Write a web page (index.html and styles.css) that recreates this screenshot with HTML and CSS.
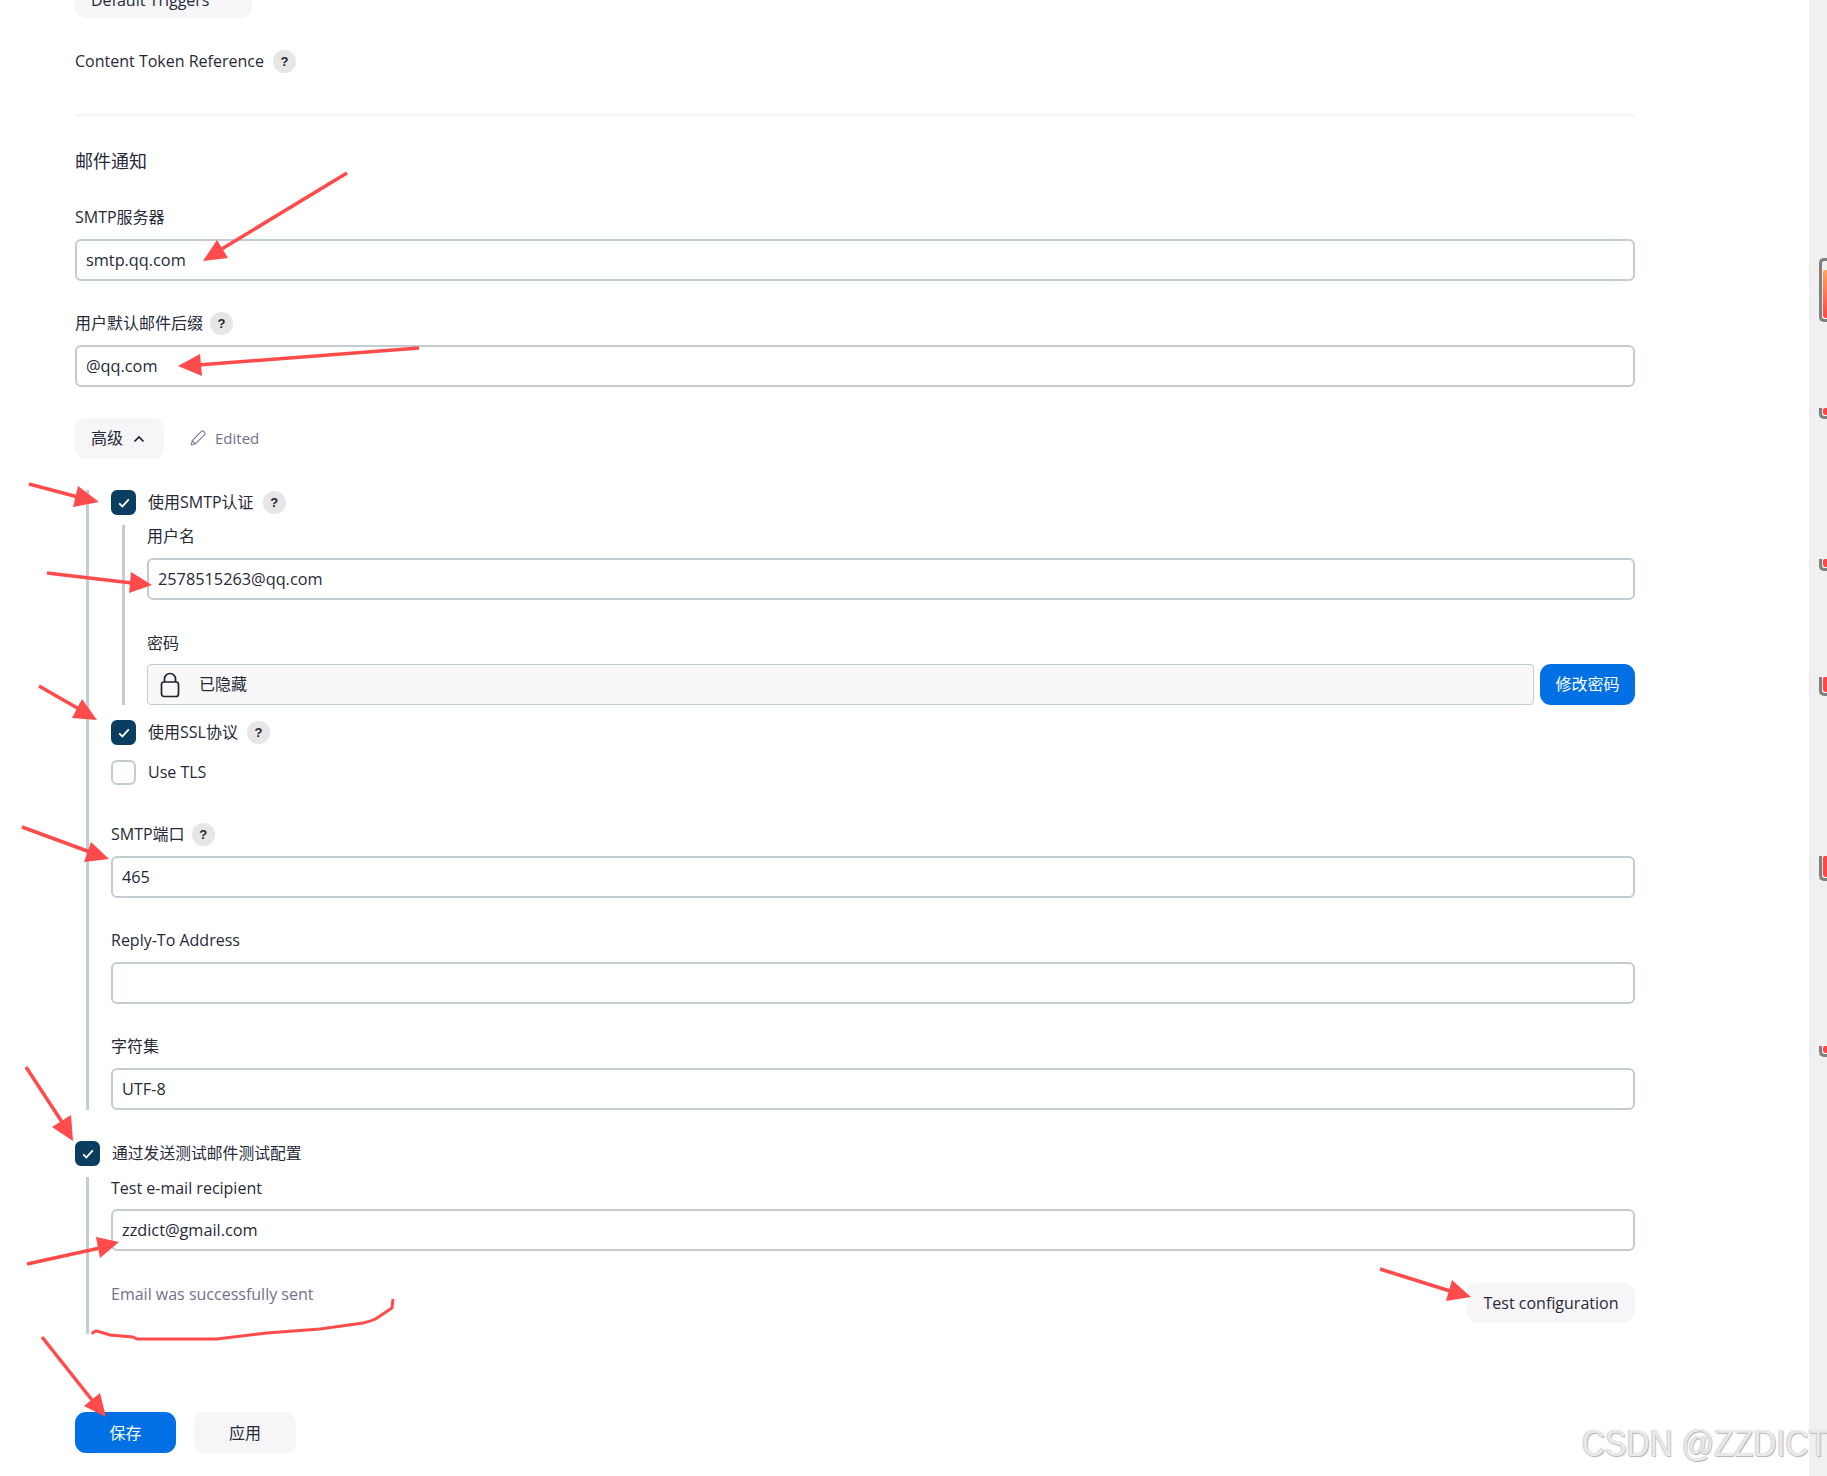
FILE: index.html
```html
<!DOCTYPE html>
<html lang="zh">
<head>
<meta charset="utf-8">
<title>邮件通知</title>
<link rel="stylesheet" href="styles.css">
</head>
<body>
<div class="shell">
  <main class="page">
    <button class="btn trigger">Default Triggers <span class="tri-caret">⌄</span></button>
    <div class="row token"><span>Content Token Reference</span><span class="help">?</span></div>
    <div class="divider"></div>
    <h2 class="section">邮件通知</h2>

    <div class="field first">
      <label class="lbl">SMTP服务器</label>
      <div class="input">smtp.qq.com</div>
    </div>
    <div class="field">
      <label class="lbl row"><span>用户默认邮件后缀</span><span class="help">?</span></label>
      <div class="input">@qq.com</div>
    </div>

    <div class="adv-row">
      <button class="btn adv">高级
        <svg class="chev" viewBox="0 0 12 8" width="12" height="8"><path d="M1.5 6.5 6 2l4.5 4.5" fill="none" stroke="#1f2330" stroke-width="1.7"/></svg>
      </button>
      <span class="edited">
        <svg viewBox="0 0 16 16" width="16" height="16"><path d="M1.2 14.8l1-4.2L11.4 1.4a1.6 1.6 0 0 1 2.3 0l.9.9a1.6 1.6 0 0 1 0 2.3L5.4 13.8z M2.2 10.6l3.2 3.2" fill="none" stroke="#7a7a96" stroke-width="1.1" stroke-linejoin="round"/></svg>
        Edited
      </span>
    </div>

    <section class="group adv-group">
      <div class="check-row">
        <span class="cb on"><svg viewBox="0 0 12 10" width="12" height="10"><path d="M1.2 5.4 4.4 8.4 10.8 1.4" fill="none" stroke="#fff" stroke-width="1.8"/></svg></span>
        <span>使用SMTP认证</span><span class="help">?</span>
      </div>
      <div class="group inner">
        <label class="lbl">用户名</label>
        <div class="input">2578515263@qq.com</div>
        <label class="lbl pw-lbl">密码</label>
        <div class="pw-row">
          <div class="pw-box">
            <svg viewBox="0 0 20 26" width="20" height="26"><path d="M4.5 10V7a5.5 5.5 0 0 1 11 0v3" fill="none" stroke="#1f2330" stroke-width="1.7"/><rect x="1.5" y="10" width="17" height="14.5" rx="2.5" fill="none" stroke="#1f2330" stroke-width="1.7"/></svg>
            <span>已隐藏</span>
          </div>
          <button class="btn primary change">修改密码</button>
        </div>
      </div>
      <div class="check-row ssl">
        <span class="cb on"><svg viewBox="0 0 12 10" width="12" height="10"><path d="M1.2 5.4 4.4 8.4 10.8 1.4" fill="none" stroke="#fff" stroke-width="1.8"/></svg></span>
        <span>使用SSL协议</span><span class="help">?</span>
      </div>
      <div class="check-row tls">
        <span class="cb"></span>
        <span>Use TLS</span>
      </div>
      <div class="field port">
        <label class="lbl row"><span>SMTP端口</span><span class="help">?</span></label>
        <div class="input">465</div>
      </div>
      <div class="field">
        <label class="lbl">Reply-To Address</label>
        <div class="input"></div>
      </div>
      <div class="field">
        <label class="lbl">字符集</label>
        <div class="input">UTF-8</div>
      </div>
    </section>

    <div class="check-row test-check">
      <span class="cb on"><svg viewBox="0 0 12 10" width="12" height="10"><path d="M1.2 5.4 4.4 8.4 10.8 1.4" fill="none" stroke="#fff" stroke-width="1.8"/></svg></span>
      <span class="test-text">通过发送测试邮件测试配置</span>
    </div>
    <section class="group test-group">
      <label class="lbl">Test e-mail recipient</label>
      <div class="input">zzdict@gmail.com</div>
      <div class="test-row">
        <span class="sent">Email was successfully sent</span>
        <button class="btn test-btn">Test configuration</button>
      </div>
    </section>

    <div class="actions">
      <button class="btn primary save">保存</button>
      <button class="btn apply">应用</button>
    </div>
  </main>

  <aside class="gutter">
    <span class="mark m1"></span>
    <span class="mark m2"></span>
    <span class="mark m3"></span>
    <span class="mark m4"></span>
    <span class="mark m5"></span>
    <span class="mark m6"></span>
  </aside>
</div>

<svg class="notes" viewBox="0 0 1827 1476" width="1827" height="1476">
  <g class="arrow">
    <path d="M347 173 L220 250"/><polygon points="203,261 217,240 228,258"/>
    <path d="M419 348 L198 365"/><polygon points="178,366 200,354 202,376"/>
    <path d="M29 484 L78 497"/><polygon points="99,502 78,486 73,507"/>
    <path d="M47 573 L132 583"/><polygon points="152,585 131,572 129,593"/>
    <path d="M39 686 L79 709"/><polygon points="97,720 82,699 72,718"/>
    <path d="M22 827 L90 852"/><polygon points="109,859 91,842 84,862"/>
    <path d="M26 1067 L62 1122"/><polygon points="73,1141 71,1115 52,1127"/>
    <path d="M27 1264 L100 1248"/><polygon points="119,1242 96,1237 100,1258"/>
    <path d="M1380 1269 L1450 1291"/><polygon points="1471,1297 1452,1280 1446,1301"/>
    <path d="M42 1337 L92 1400"/><polygon points="106,1417 100,1393 84,1406"/>
  </g>
  <path class="squiggle" d="M92 1334 Q94 1331 97 1331 L110 1335 L133 1337 L137 1339 L217 1339 L267 1333 L320 1329 L363 1323 Q372 1321 377 1318 L392 1308 L393 1299"/>
</svg>
<div class="watermark">CSDN @ZZDICT</div>
</body>
</html>
```
FILE: styles.css
```css
* { box-sizing: border-box; }
html, body { margin: 0; height: 1476px; overflow: hidden; background: #fff; }
body {
  position: relative;
  font-family: "Open Sans", "Noto Sans CJK SC", sans-serif;
  font-size: 16px;
  line-height: 22px;
  color: #262a38;
}
.shell { display: flex; height: 1476px; }
.page { flex: 1; padding-left: 75px; padding-right: 174px; min-width: 0; }
.gutter { width: 18px; background: #f0f0f0; position: relative; }

.row { display: flex; align-items: center; gap: 9px; }
.help {
  width: 23px; height: 23px; border-radius: 50%;
  background: #e6e6e6; color: #1f2330;
  font-size: 13px; font-weight: 700; line-height: 23px; text-align: center;
  font-family: "Liberation Sans", sans-serif;
  flex: none;
}

.btn {
  border: 0; font: inherit; color: inherit; background: #f6f6f8;
  border-radius: 11px; padding: 0; display: inline-flex;
  align-items: center; justify-content: center;
}
.primary { background: #0070e4; color: #fff; }
.trigger { width: 177px; height: 42px; margin-top: -24px; display: flex; justify-content: flex-start; gap: 10px; padding-left: 16px; align-items: flex-start; padding-top: 13px; }
.tri-caret { font-size: 12px; line-height: 12px; }

.token { margin-top: 32px; height: 23px; }
.token > span:first-child { margin-top: -2px; }
.divider { height: 2px; background: #f5f5f8; margin-top: 41px; }
.section { font-size: 18px; font-weight: 400; line-height: 24px; margin: 33px 0 0; }

.field { margin-top: 31px; }
.field.first { margin-top: 33px; }
.lbl { display: flex; height: 22px; align-items: center; }
.lbl.row > span:last-child { margin-left: -2px; }
.input {
  height: 42px; margin-top: 11px; padding: 0 9px;
  border: 2px solid #c3ccd1; border-radius: 6px; background: #fff;
  font-size: 16.3px; line-height: 38px;
}

.adv-row { display: flex; align-items: center; margin-top: 31px; height: 41px; }
.adv { width: 89px; height: 41px; gap: 10px; padding-bottom: 2px; padding-right: 3px; }
.chev { margin-top: 2px; }
.edited { display: flex; align-items: center; gap: 9px; margin-left: 26px; color: #71718b; font-size: 15px; padding-bottom: 2px; }

.group { border-left: 3px solid #c3ccd1; }
.adv-group { margin: 31px 0 0 11px; padding-left: 22px; }
.check-row { display: flex; align-items: center; height: 25px; gap: 12px; }
.check-row > span:nth-child(2) { margin-top: -1px; }
.check-row .help { margin-left: -3px; }
.test-text { font-size: 15.8px; }
.cb {
  width: 25px; height: 25px; border-radius: 6px; flex: none;
  border: 2px solid #c3ccd1; background: #fff;
  display: flex; align-items: center; justify-content: center;
}
.cb.on { background: #0b3d60; border-color: #0b3d60; }
.inner { margin: 10px 0 0 11px; padding-left: 22px; height: 180px; }
.pw-lbl { margin-top: 32px; }
.pw-row { display: flex; gap: 6px; margin-top: 10px; height: 41px; }
.pw-box {
  flex: 1; display: flex; align-items: center; gap: 19px; padding-left: 12px;
  border: 1px solid #c3ccd1; border-radius: 4px; background: #f8f8f8;
}
.pw-box > span { margin-top: -2px; }
.change { width: 95px; height: 41px; padding-bottom: 1px; }
.ssl, .tls { margin-top: 15px; }
.field.port { margin-top: 38px; }

.test-check { margin-top: 31px; }
.test-group { margin: 11px 0 0 11px; padding: 0 0 11px 22px; }
.test-group .input { margin-top: 10px; }
.test-row { display: flex; justify-content: space-between; align-items: flex-start; margin-top: 32px; }
.sent { color: #71718b; }
.test-btn { width: 168px; height: 40px; }

.actions { display: flex; gap: 18px; margin-top: 78px; }
.save { width: 101px; height: 41px; }
.apply { width: 102px; height: 41px; }

.mark {
  position: absolute; left: 10px; width: 8px;
  border: 3px solid #808080; border-right: 0;
  border-radius: 5px 0 0 5px; background: #f0f0f0;
}
.mark::after {
  content: ""; position: absolute; left: 1px; top: 0; bottom: 1px; right: 0;
  background: #ff4545; border-radius: 2px 0 0 3px;
}
.m2, .m3, .m4, .m5, .m6 { border-top: 0; border-radius: 0 0 0 5px; }
.m1 { top: 258px; height: 64px; }
.m1::after { top: 9px; background: linear-gradient(#ffa65e, #ff4545); }
.m2 { top: 408px; height: 11px; }
.m3 { top: 559px; height: 12px; }
.m4 { top: 677px; height: 19px; }
.m5 { top: 856px; height: 25px; }
.m6 { top: 1046px; height: 11px; }

.notes { position: absolute; left: 0; top: 0; pointer-events: none; }
.arrow path { stroke: #ff4b4b; stroke-width: 3.5; fill: none; }
.arrow polygon { fill: #ff4b4b; }
.squiggle { stroke: #ff4b4b; stroke-width: 3; fill: none; }

.watermark {
  position: absolute; left: 1582px; top: 1423px;
  font-family: "Liberation Sans", sans-serif; font-size: 36px; line-height: 41px;
  color: #e9e9e9; white-space: nowrap;
  transform: scaleX(.89); transform-origin: left center;
  text-shadow: 1px 1px 1px #b0b0b0, -1px 0 1px #cfcfcf;
}
```
